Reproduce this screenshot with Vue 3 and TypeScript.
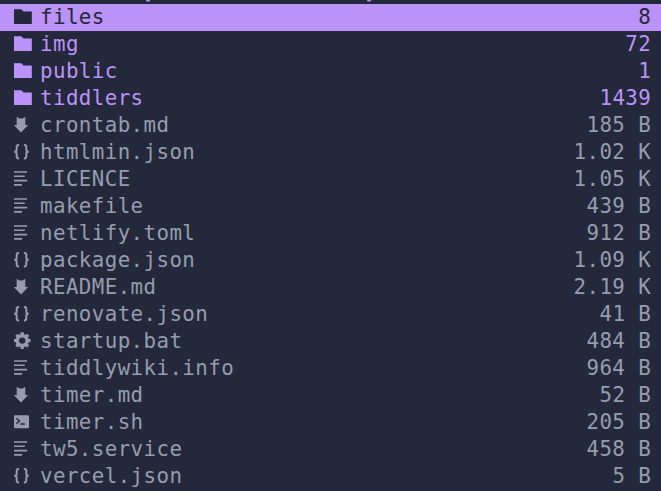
<script setup lang="ts">
type Kind = 'folder' | 'markdown' | 'json' | 'text' | 'gear' | 'shell'
interface Entry {
  name: string
  size: string
  kind: Kind
}

const selected = 'files'
const entries: Entry[] = [
  { name: 'files', size: '8', kind: 'folder' },
  { name: 'img', size: '72', kind: 'folder' },
  { name: 'public', size: '1', kind: 'folder' },
  { name: 'tiddlers', size: '1439', kind: 'folder' },
  { name: 'crontab.md', size: '185 B', kind: 'markdown' },
  { name: 'htmlmin.json', size: '1.02 K', kind: 'json' },
  { name: 'LICENCE', size: '1.05 K', kind: 'text' },
  { name: 'makefile', size: '439 B', kind: 'text' },
  { name: 'netlify.toml', size: '912 B', kind: 'text' },
  { name: 'package.json', size: '1.09 K', kind: 'json' },
  { name: 'README.md', size: '2.19 K', kind: 'markdown' },
  { name: 'renovate.json', size: '41 B', kind: 'json' },
  { name: 'startup.bat', size: '484 B', kind: 'gear' },
  { name: 'tiddlywiki.info', size: '964 B', kind: 'text' },
  { name: 'timer.md', size: '52 B', kind: 'markdown' },
  { name: 'timer.sh', size: '205 B', kind: 'shell' },
  { name: 'tw5.service', size: '458 B', kind: 'text' },
  { name: 'vercel.json', size: '5 B', kind: 'json' },
]
const teeth = [0, 45, 90, 135, 180, 225, 270, 315]
</script>

<template>
  <main class="manager">
    <svg class="edge" viewBox="0 0 661 4" aria-hidden="true">
      <path d="M146 0h4.5l-1.2 1.6h-2.8zM367 0h4.5l-1.2 1.6h-2.8z" />
    </svg>
    <ul class="list">
      <li
        v-for="entry in entries"
        :key="entry.name"
        class="row"
        :class="{ folder: entry.kind === 'folder', selected: entry.name === selected }"
      >
        <svg class="icon" viewBox="0 0 20 27" aria-hidden="true">
          <path v-if="entry.kind === 'folder'" d="M0 5.3h7.3l2.2 2.2H17.8V20H0z" />
          <path v-else-if="entry.kind === 'markdown'" d="M2.7 4.8l2.7 1.8h3.2l2.7-1.8v8.2h2.9L7 20.4-.2 13h2.9z" />
          <g v-else-if="entry.kind === 'json'" class="stroke">
            <path d="M5.1 6H4.5Q2.7 6 2.7 7.8V10.4Q2.7 12.7.3 12.7Q2.7 12.7 2.7 15V17.6Q2.7 19.4 4.5 19.4H5.1" />
            <path d="M9.9 6h.6q1.8 0 1.8 1.8v2.6q0 2.3 2.4 2.3q-2.4 0-2.4 2.3v2.6q0 1.8-1.8 1.8h-.6" />
          </g>
          <path v-else-if="entry.kind === 'text'" d="M0 5.2h13v1.6H0zM0 9.5h10.8v1.6H0zM0 13.8h13.2v1.6H0zM0 18.1h8v1.6H0z" />
          <g v-else-if="entry.kind === 'gear'">
            <circle class="ring" cx="8.2" cy="12.6" r="4.9" />
            <path v-for="angle in teeth" :key="angle" d="M6.3 7.2l.4-2.9h3l.4 2.9z" :transform="`rotate(${angle} 8.2 12.6)`" />
          </g>
          <g v-else>
            <rect y="6.2" width="15" height="13" rx="1" />
            <path class="prompt" d="M2.4 9.3l3 2.7-3 2.7M6.4 15.1h4.5" />
          </g>
        </svg>
        <span class="name">{{ entry.name }}</span>
        <span class="size">{{ entry.size }}</span>
      </li>
    </ul>
  </main>
</template>

<style>
body {
  margin: 0;
  background: #24283b;
}
</style>

<style scoped>
.manager {
  height: 491px;
  overflow: hidden;
  background: #24283b;
  color: #959cae;
  font: 20.8px/27px "DejaVu Sans Mono", monospace;
  letter-spacing: 0.42px;
}
.edge {
  display: block;
  width: 661px;
  height: 4px;
  fill: #bb92f7;
}
.list {
  margin: 0;
  padding: 0;
  list-style: none;
}
.row {
  display: flex;
  height: 27px;
  padding: 0 9.8px 0 14px;
  white-space: pre;
}
.folder {
  color: #bb92f7;
}
.selected {
  background: #bb92f7;
  color: #24283b;
}
.icon {
  flex: none;
  width: 20px;
  height: 27px;
  margin-right: 6px;
  fill: currentColor;
}
.stroke {
  fill: none;
  stroke: currentColor;
  stroke-width: 2;
}
.ring {
  fill: none;
  stroke: currentColor;
  stroke-width: 3.4;
}
.prompt {
  fill: none;
  stroke: #24283b;
  stroke-width: 1.5;
}
.size {
  margin-left: auto;
}
</style>
